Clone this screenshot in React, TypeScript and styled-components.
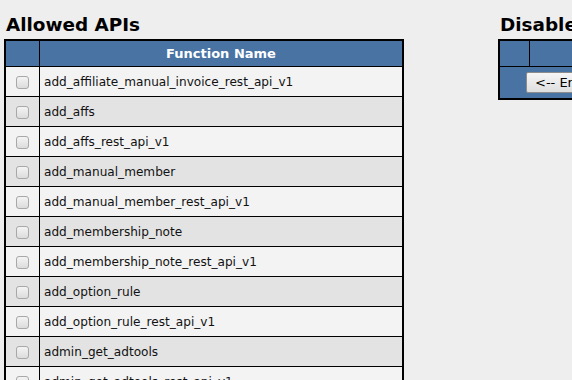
import React from 'react';
import styled, { createGlobalStyle } from 'styled-components';

const GlobalStyle = createGlobalStyle`
  html, body {
    margin: 0;
    padding: 0;
    background: #eeeeee;
    font-family: "DejaVu Sans", Verdana, sans-serif;
    color: #111111;
  }
`;

const StyledPage = styled.div`
  display: flex;
  align-items: flex-start;
  gap: 94px;
  padding: 0 0 0 4px;
  width: 1200px;
`;

const StyledSection = styled.div`
  width: 400px;
  flex-shrink: 0;
`;

const StyledHeading = styled.h3`
  margin: 14px 0 3px 2px;
  font-size: 18.4px;
  line-height: 22px;
  font-weight: bold;
  color: #000;
`;

const StyledTable = styled.table`
  width: 400px;
  border-collapse: collapse;
  border: 2px solid #000;
`;

const StyledHeadCell = styled.th<{ $w?: number }>`
  background: #4873a3;
  color: #ffffff;
  font-size: 13px;
  font-weight: bold;
  height: 25px;
  padding: 0;
  border: 1px solid #000;
  text-align: center;
  width: ${(p) => (p.$w ? `${p.$w}px` : 'auto')};
`;

const StyledRow = styled.tr<{ $alt: boolean }>`
  background: ${(p) => (p.$alt ? '#e3e3e3' : '#f3f3f3')};
`;

const StyledCell = styled.td`
  border: 1px solid #000;
  height: 29px;
  padding: 0 0 0 4px;
  font-size: 12.1px;
  vertical-align: middle;
`;

const StyledBoxCell = styled.td`
  border: 1px solid #000;
  height: 29px;
  padding: 0;
  text-align: center;
  vertical-align: middle;
`;

const StyledCheck = styled.input`
  appearance: none;
  display: block;
  margin: 1px auto 0;
  width: 13px;
  height: 13px;
  border: 1px solid #a8a8a8;
  border-radius: 3px;
  background: linear-gradient(#f4f4f4, #dcdcdc);
  box-sizing: border-box;
`;

const StyledActionRow = styled.tr`
  background: #4873a3;
`;

const StyledActionCell = styled.td`
  border: 1px solid #000;
  height: 31px;
  padding: 0 0 0 26px;
  vertical-align: middle;
`;

const StyledButton = styled.button`
  font-family: "DejaVu Sans", Verdana, sans-serif;
  font-size: 13px;
  height: 21px;
  padding: 0 8px;
  color: #000;
  border: 1px solid #8c8c8c;
  border-radius: 2px;
  background: linear-gradient(#f6f6f6, #dedede);
  white-space: nowrap;
`;

const allowed = [
  'add_affiliate_manual_invoice_rest_api_v1',
  'add_affs',
  'add_affs_rest_api_v1',
  'add_manual_member',
  'add_manual_member_rest_api_v1',
  'add_membership_note',
  'add_membership_note_rest_api_v1',
  'add_option_rule',
  'add_option_rule_rest_api_v1',
  'admin_get_adtools',
  'admin_get_adtools_rest_api_v1',
  'admin_get_affiliate',
];

export default function App() {
  return (
    <>
      <GlobalStyle />
      <StyledPage>
        <StyledSection>
          <StyledHeading>Allowed APIs</StyledHeading>
          <StyledTable>
            <thead>
              <tr>
                <StyledHeadCell $w={33} />
                <StyledHeadCell>Function Name</StyledHeadCell>
              </tr>
            </thead>
            <tbody>
              {allowed.map((name, i) => (
                <StyledRow key={name} $alt={i % 2 === 1}>
                  <StyledBoxCell>
                    <StyledCheck type="checkbox" />
                  </StyledBoxCell>
                  <StyledCell>{name}</StyledCell>
                </StyledRow>
              ))}
            </tbody>
          </StyledTable>
        </StyledSection>
        <StyledSection>
          <StyledHeading>Disabled APIs</StyledHeading>
          <StyledTable>
            <thead>
              <tr>
                <StyledHeadCell $w={29} />
                <StyledHeadCell>Function Name</StyledHeadCell>
              </tr>
            </thead>
            <tbody>
              <StyledActionRow>
                <StyledActionCell colSpan={2}>
                  <StyledButton type="button">&lt;-- Enable Selected</StyledButton>
                </StyledActionCell>
              </StyledActionRow>
            </tbody>
          </StyledTable>
        </StyledSection>
      </StyledPage>
    </>
  );
}
